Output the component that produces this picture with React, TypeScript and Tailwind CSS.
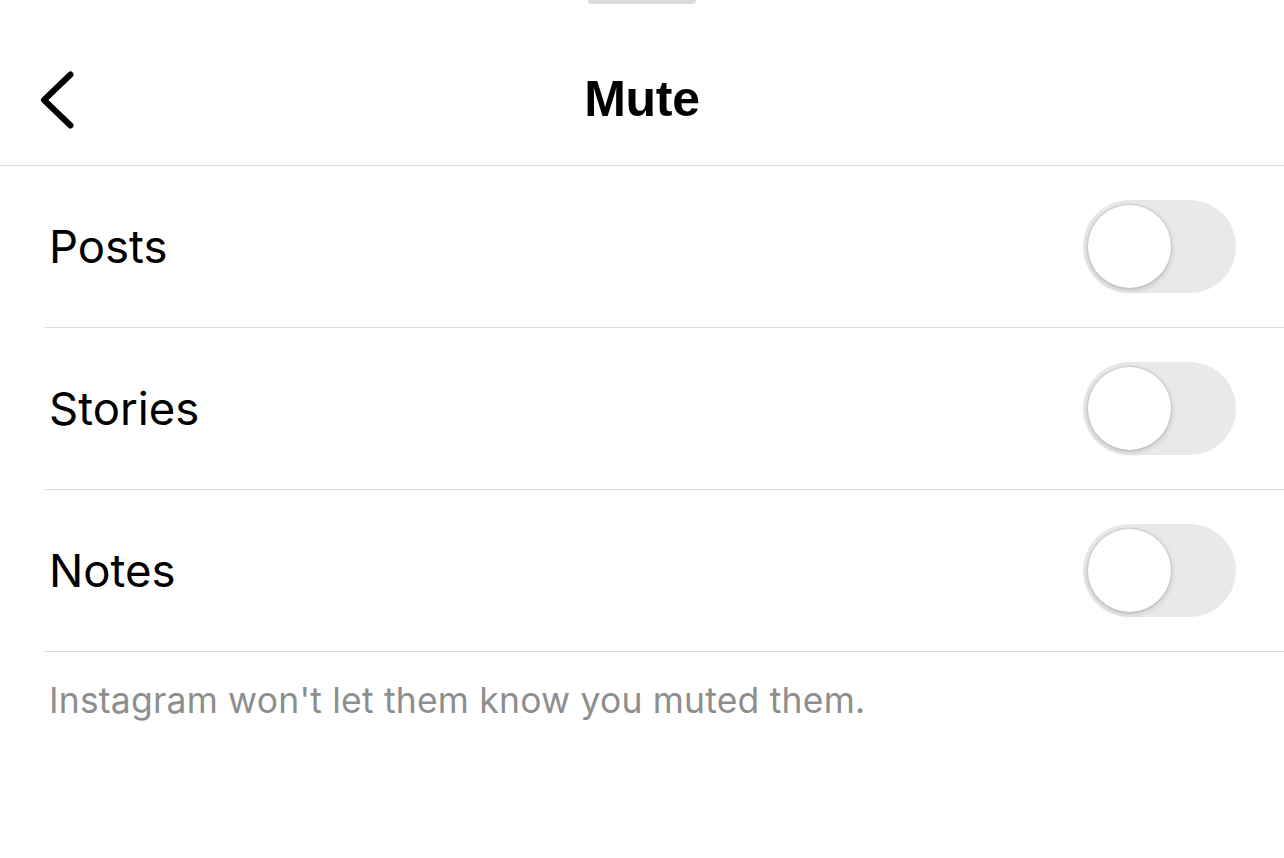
import { useState } from 'react';

const rows = ['Posts', 'Stories', 'Notes'];

function Toggle({ on, onChange }: { on: boolean; onChange: () => void }) {
  return (
    <button
      onClick={onChange}
      className={`relative w-[153px] h-[93px] rounded-full flex items-center px-[5px] ${
        on ? 'bg-[#0095f6] justify-end' : 'bg-[#e9e9ea] justify-start'
      }`}
    >
      <span className="w-[83px] h-[83px] rounded-full bg-white shadow-[0_2px_6px_rgba(0,0,0,0.18),0_0_0_1.5px_rgba(0,0,0,0.06)]" />
    </button>
  );
}

export default function App() {
  const [state, setState] = useState<Record<string, boolean>>({});

  return (
    <div className="w-[1284px] h-[858px] bg-white overflow-hidden font-['Inter','Noto_Sans',sans-serif] text-black">
      {/* 顶部拖动条 */}
      <div className="flex justify-center">
        <div className="w-[108px] h-[4px] bg-[#dbdbdb] rounded-b-full" />
      </div>

      {/* 标题栏 */}
      <div className="h-[162px] pt-[30px] flex items-center px-[40px] border-b-[1.5px] border-[#dbdbdb] relative">
        <button className="w-[34px] h-[58px] flex items-center">
          <svg width="34" height="58" viewBox="0 0 34 58" fill="none">
            <path d="M30.5 3.5 L4 29 L30.5 54.5" stroke="black" strokeWidth="6" strokeLinecap="round" strokeLinejoin="round" />
          </svg>
        </button>
        <div className="absolute inset-x-0 top-[30px] bottom-0 flex items-center justify-center pointer-events-none">
          <h1 className="text-[50px] font-bold tracking-[-0.3px] font-['Liberation_Sans','Inter',sans-serif]">Mute</h1>
        </div>
      </div>

      {/* 选项列表 */}
      <div className="pl-[45px]">
        {rows.map((r) => (
          <div key={r} className="h-[162px] flex items-center justify-between pr-[48px] border-b-[1.5px] border-[#dbdbdb]">
            <span className="pl-[4px] text-[45.5px] leading-none">{r}</span>
            <Toggle on={!!state[r]} onChange={() => setState((s) => ({ ...s, [r]: !s[r] }))} />
          </div>
        ))}
      </div>

      <p className="pl-[49px] pt-[22px] text-[35.5px] text-[#8e8e8e] tracking-[0.2px]">
        Instagram won't let them know you muted them.
      </p>
    </div>
  );
}
